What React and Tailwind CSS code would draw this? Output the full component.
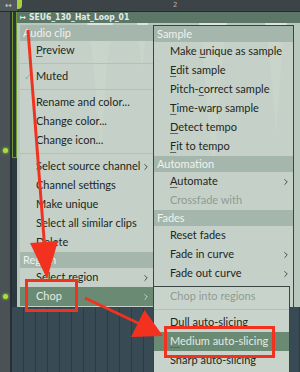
import { ChevronRight } from 'lucide-react';

const leftItems = [
  { t: 'header', label: 'Audio clip' },
  { label: 'Preview', u: 0 },
  { t: 'sep' },
  { label: 'Muted', check: true },
  { t: 'sep' },
  { label: 'Rename and color...' },
  { label: 'Change color...' },
  { label: 'Change icon...' },
  { t: 'sep' },
  { label: 'Select source channel', arrow: true },
  { label: 'Channel settings' },
  { label: 'Make unique' },
  { label: 'Select all similar clips' },
  { label: 'Delete' },
  { t: 'header', label: 'Region' },
  { label: 'Select region', arrow: true },
  { label: 'Chop', arrow: true, active: true },
];

const rightItems = [
  { t: 'header', label: 'Sample' },
  { label: 'Make unique as sample', u: 5 },
  { label: 'Edit sample', u: 0 },
  { label: 'Pitch-correct sample', u: 6 },
  { label: 'Time-warp sample', u: 0 },
  { label: 'Detect tempo', u: 0 },
  { label: 'Fit to tempo', u: 0 },
  { t: 'header', label: 'Automation' },
  { label: 'Automate', arrow: true, u: 0 },
  { label: 'Crossfade with', disabled: true },
  { t: 'header', label: 'Fades' },
  { label: 'Reset fades' },
  { label: 'Fade in curve', arrow: true },
  { label: 'Fade out curve', arrow: true },
];

const chopItems = [
  { label: 'Chop into regions', disabled: true },
  { t: 'sep' },
  { label: 'Dull auto-slicing' },
  { label: 'Medium auto-slicing', active: true, u: 0 },
  { label: 'Sharp auto-slicing' },
];

function Label({ text, u }) {
  if (u === undefined) return text;
  return (
    <>
      {text.slice(0, u)}
      <span className="underline decoration-1 decoration-[#5b6660] underline-offset-2">{text[u]}</span>
      {text.slice(u + 1)}
    </>
  );
}

function MenuRows({ items }) {
  return items.map((it, i) => {
    if (it.t === 'header') {
      return (
        <div key={i} className="h-[16px] flex items-center pl-[3px] bg-[#a1b2a8]/90 text-[#eef3ef] text-[11px]">
          {it.label}
        </div>
      );
    }
    if (it.t === 'sep') {
      return <div key={i} className="h-[7px] flex items-center"><div className="w-full h-px bg-[#b2c0b6]" /></div>;
    }
    return (
      <div
        key={i}
        className={[
          'h-[19px] flex items-center pr-[2px] text-[11px]',
          it.active ? 'bg-[#6b8a73] text-[#e3ebe4]' : it.disabled ? 'text-[#8e9c94]' : 'text-[#1d2621]',
        ].join(' ')}
      >
        <div className="w-[16px] flex justify-center text-[9px] text-[#98a69e]">{it.check ? '✓' : ''}</div>
        <div className="flex-1 whitespace-nowrap">
          <Label text={it.label} u={it.u} />
        </div>
        {it.arrow && <ChevronRight size={10} strokeWidth={2} className={it.active ? 'text-[#d6e0d8]' : 'text-[#2b3530]'} />}
      </div>
    );
  });
}

function Waveform() {
  return (
    <svg width="282" height="284" className="block">
      <g fill="#dfe8e1" opacity="0.9">
        <path d="M70 0 L74 20 L78 60 L82 100 L84 130 L86 100 L90 40 L96 0 Z" />
        <path d="M182 0 L186 30 L190 80 L194 120 L197 150 L200 110 L204 50 L210 0 Z" />
        <path d="M248 0 L252 30 L256 70 L259 110 L262 70 L266 20 L270 0 Z" />
        <path d="M120 0 L122 20 L125 45 L128 20 L131 0 Z" />
      </g>
    </svg>
  );
}

export default function App() {
  return (
    <div className="relative w-[300px] h-[372px] overflow-hidden bg-[#34454d] flex flex-col font-['Lato',sans-serif]">
      {/* Top bar */}
      <div className="h-[11px] flex">
        <div className="w-[17px] bg-[#50585c] flex items-center justify-center text-[8px] text-[#c9d0d2] font-['DejaVu_Sans',sans-serif]">↔</div>
        <div className="w-[6px] bg-[#3c4448] flex">
          <div className="w-[5px] h-[9px] bg-[#a4d23c] rounded-br-[4px]" />
        </div>
        <div className="flex-1 bg-[#3c4448] flex items-center pl-[150px] text-[7px] text-[#aab4b6] font-['DejaVu_Sans',sans-serif]">2</div>
      </div>
      <div className="h-px bg-[#232b2f]" />

      <div className="flex flex-1">
        {/* Left column */}
        <div className="w-[11px] bg-[#4b5256] flex flex-col items-center">
          <div className="mt-[136px] w-[5px] h-[5px] rounded-full bg-[#a6e03c] shadow-[0_0_3px_#a6e03c]" />
          <div className="mt-[141px] w-[5px] h-[5px] rounded-full bg-[#a6e03c] shadow-[0_0_3px_#a6e03c]" />
        </div>
        <div className="w-[2px] bg-[#263034]" />

        <div className="flex-1 flex flex-col">
          <div className="flex h-[295px]">
            {/* lead strip */}
            <div className="w-[5px] flex flex-col bg-[#2c393e]">
              <div className="h-[146px] border-x border-b border-[#6f9a34] bg-[#2b393d]" />
            </div>
            {/* clip */}
            <div className="flex-1 flex flex-col">
              <div className="h-[11px] bg-[#5c7668] flex items-center gap-[3px] pl-[3px] text-[#e5ede7] font-['DejaVu_Sans_Condensed','DejaVu_Sans',sans-serif] font-bold text-[8.5px]">
                <span className="text-[8px]">↦</span>
                <span>SEU6_130_Hat_Loop_01</span>
              </div>
              <div className="flex-1 bg-[#b9c8bd] overflow-hidden">
                <Waveform />
              </div>
            </div>
          </div>
          {/* grid below */}
          <div className="flex-1 flex bg-[#384a53]">
            {Array.from({ length: 24 }).map((_, i) => (
              <div key={i} className="w-[12px] border-r border-[#2d3c44]" />
            ))}
          </div>
        </div>
      </div>

      {/* Left menu */}
      <div className="absolute left-[20px] top-[25px] w-[134px] h-[283px] bg-[#c6d2c9]/90 border-r border-b border-[#3a4644]">
        <MenuRows items={leftItems} />
      </div>

      {/* Right menu */}
      <div className="absolute left-[153px] top-[25px] w-[141px] h-[283px] bg-[#c6d2c9]/90 border border-[#3a4644]">
        <MenuRows items={rightItems} />
      </div>

      {/* Chop submenu */}
      <div className="absolute left-[153px] top-[286px] w-[137px] h-[100px] bg-[#c8d4cb] border border-[#3a4644]">
        <MenuRows items={chopItems} />
      </div>

      {/* Annotations */}
      <svg className="absolute inset-0 pointer-events-none" width="300" height="372">
        <g stroke="#f2321f" fill="none" strokeWidth="3">
          <line x1="28" y1="30" x2="44.5" y2="245" />
          <line x1="85" y1="298" x2="140" y2="324" />
          <rect x="26.5" y="280.5" width="50" height="30" />
          <rect x="165.5" y="327.5" width="108" height="29" />
        </g>
        <g fill="#f2321f">
          <polygon points="30,243 58,241 47,279" />
          <polygon points="131,337 144.5,310 163,336" />
        </g>
      </svg>
    </div>
  );
}
